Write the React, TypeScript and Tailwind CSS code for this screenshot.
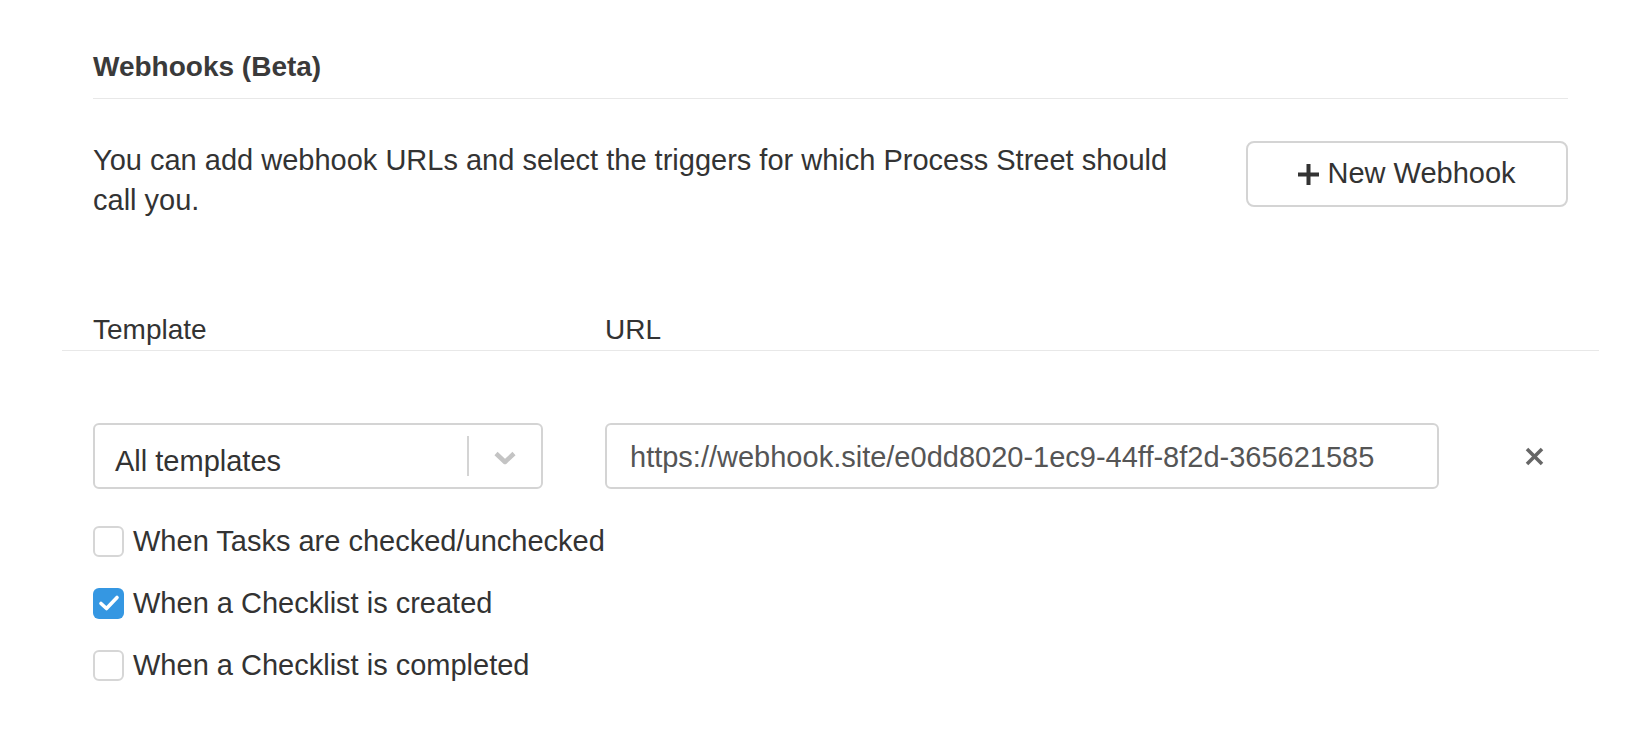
import React from 'react';

const triggers = [
  { label: 'When Tasks are checked/unchecked', checked: false },
  { label: 'When a Checklist is created', checked: true },
  { label: 'When a Checklist is completed', checked: false },
];

function Checkbox({ checked }: { checked: boolean }) {
  if (checked) {
    return (
      <span className="flex h-[31px] w-[31px] shrink-0 items-center justify-center rounded-[6px] bg-[#3597e2]">
        <svg width="22" height="18" viewBox="0 0 22 18" fill="none">
          <polyline points="3,9.5 8.5,14.5 19,3.5" stroke="#fff" strokeWidth="3.6" strokeLinecap="round" strokeLinejoin="round" />
        </svg>
      </span>
    );
  }
  return <span className="h-[31px] w-[31px] shrink-0 rounded-[6px] border-2 border-[#d6d6d6] bg-white" />;
}

export default function App() {
  const [checks, setChecks] = React.useState(triggers.map((t) => t.checked));

  return (
    <div className="min-h-screen bg-white font-['Liberation_Sans',Arial,sans-serif] text-[#333]">
      <div className="ml-[93px] w-[1475px] pt-[47px]">
        {/* Section title */}
        <div className="border-b border-[#e8e8e8] pb-[11px]">
          <h2 className="text-[28px] font-bold leading-[40px] text-[#3a3a3a]">Webhooks (Beta)</h2>
        </div>

        {/* Description + action */}
        <div className="mt-[41px] flex items-start justify-between">
          <p className="w-[1110px] text-[29px] leading-[40px]">
            You can add webhook URLs and select the triggers for which Process Street should call you.
          </p>
          <button className="mt-px flex h-[66px] w-[322px] items-center justify-center gap-[8px] rounded-[8px] border-2 border-[#d4d4d4] bg-white text-[29px] text-[#333]">
            <svg width="21" height="21" viewBox="0 0 21 21">
              <rect x="0" y="8.5" width="21" height="4" fill="#333" />
              <rect x="8.5" y="0" width="4" height="21" fill="#333" />
            </svg>
            <span>New Webhook</span>
          </button>
        </div>

        {/* Table header */}
        <div className="-mx-[31px] mt-[90px] flex border-b border-[#e8e8e8] px-[31px] text-[28px] leading-[40px]">
          <div className="w-[512px]">Template</div>
          <div>URL</div>
        </div>

        {/* Webhook row */}
        <div className="mt-[72px] flex items-center">
          <div className="flex h-[66px] w-[450px] items-center rounded-[6px] border-2 border-[#d4d4d4] bg-white">
            <span className="flex-1 pl-[20px] pt-[9px] text-[29px] leading-[40px] text-[#333]">All templates</span>
            <span className="h-[40px] w-[2px] bg-[#d4d4d4]" />
            <span className="flex w-[72px] items-center justify-center pt-[4px]">
              <svg width="26" height="16" viewBox="0 0 26 16" fill="none">
                <polyline points="4,3.5 13,12 22,3.5" stroke="#c4c4c4" strokeWidth="4.5" strokeLinejoin="round" />
              </svg>
            </span>
          </div>
          <input
            readOnly
            value="https://webhook.site/e0dd8020-1ec9-44ff-8f2d-365621585"
            className="ml-[62px] h-[66px] w-[834px] rounded-[6px] border-2 border-[#d4d4d4] bg-white pl-[23px] pr-[28px] pt-[3px] text-[29px] text-[#555] outline-none"
          />
          <button className="ml-[75px] flex h-[40px] w-[40px] items-center justify-center">
            <svg width="19" height="19" viewBox="0 0 19 19" fill="none">
              <line x1="2" y1="2" x2="17" y2="17" stroke="#666" strokeWidth="3.5" />
              <line x1="17" y1="2" x2="2" y2="17" stroke="#666" strokeWidth="3.5" />
            </svg>
          </button>
        </div>

        {/* Triggers */}
        <div className="mt-[32px] flex flex-col gap-[22px]">
          {triggers.map((t, i) => (
            <label
              key={t.label}
              className="flex h-[40px] cursor-pointer items-center gap-[9px] text-[29px] leading-[40px]"
              onClick={() => setChecks((c) => c.map((v, j) => (j === i ? !v : v)))}
            >
              <Checkbox checked={checks[i]} />
              <span>{t.label}</span>
            </label>
          ))}
        </div>
      </div>
    </div>
  );
}
